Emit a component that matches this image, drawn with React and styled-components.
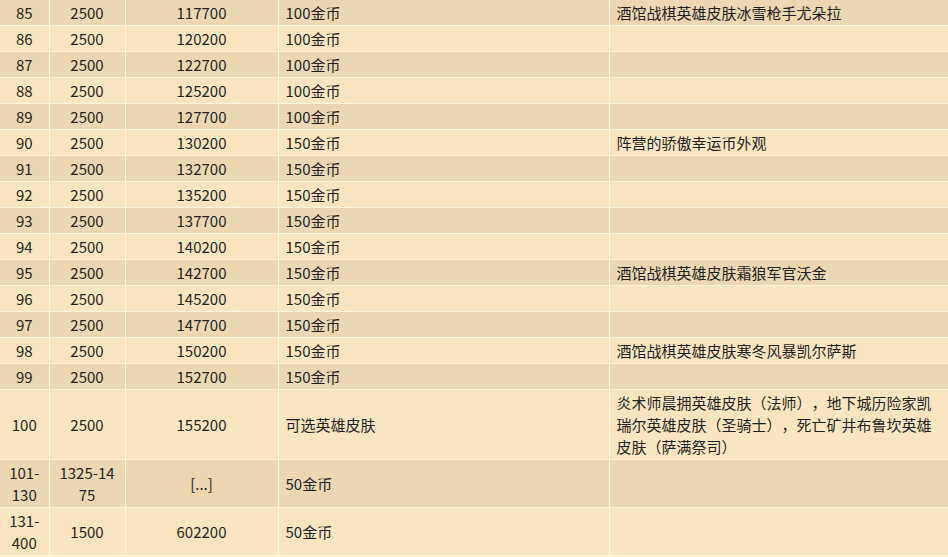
import React from "react";
import styled, { createGlobalStyle } from "styled-components";

const GlobalStyle = createGlobalStyle`
  html, body {
    margin: 0;
    padding: 0;
    background: #f9e7c1;
  }
  body {
    font-family: "Microsoft YaHei", "Noto Sans CJK SC", "Noto Sans", sans-serif;
    color: #1f1f1f;
  }
`;

const Table = styled.table`
  width: 948px;
  border-collapse: collapse;
  table-layout: fixed;
  font-size: 15px;
  line-height: 22px;
  text-spacing-trim: space-all;
`;

const Col = styled.col`
  width: ${({ $w }) => $w}px;
`;

const Row = styled.tr`
  background-color: ${({ $odd }) => ($odd ? "#ebd8b3" : "#f9e6c0")};
`;

const Cell = styled.td`
  padding: 2px 7px 1px;
  border-right: 1px solid #fff4dd;
  border-bottom: 1px solid #fff4dd;
  text-align: ${({ $left }) => ($left ? "left" : "center")};
  vertical-align: middle;
  word-break: break-all;

  &:last-child {
    border-right: none;
  }
`;

const widths = [49, 76, 153, 331, 339];

const rows = [
  ["85", "2500", "117700", "100金币", "酒馆战棋英雄皮肤冰雪枪手尤朵拉"],
  ["86", "2500", "120200", "100金币", ""],
  ["87", "2500", "122700", "100金币", ""],
  ["88", "2500", "125200", "100金币", ""],
  ["89", "2500", "127700", "100金币", ""],
  ["90", "2500", "130200", "150金币", "阵营的骄傲幸运币外观"],
  ["91", "2500", "132700", "150金币", ""],
  ["92", "2500", "135200", "150金币", ""],
  ["93", "2500", "137700", "150金币", ""],
  ["94", "2500", "140200", "150金币", ""],
  ["95", "2500", "142700", "150金币", "酒馆战棋英雄皮肤霜狼军官沃金"],
  ["96", "2500", "145200", "150金币", ""],
  ["97", "2500", "147700", "150金币", ""],
  ["98", "2500", "150200", "150金币", "酒馆战棋英雄皮肤寒冬风暴凯尔萨斯"],
  ["99", "2500", "152700", "150金币", ""],
  [
    "100",
    "2500",
    "155200",
    "可选英雄皮肤",
    "炎术师晨拥英雄皮肤（法师），地下城历险家凯瑞尔英雄皮肤（圣骑士），死亡矿井布鲁坎英雄皮肤（萨满祭司）",
  ],
  ["101-130", "1325-1475", "[...]", "50金币", ""],
  ["131-400", "1500", "602200", "50金币", ""],
];

const App = () => (
  <>
    <GlobalStyle />
    <Table>
      <colgroup>
        {widths.map((w, i) => (
          <Col key={i} $w={w} />
        ))}
      </colgroup>
      <tbody>
        {rows.map((r, i) => (
          <Row key={r[0]} $odd={i % 2 === 0}>
            <Cell>{r[0]}</Cell>
            <Cell>{r[1]}</Cell>
            <Cell>{r[2]}</Cell>
            <Cell $left>{r[3]}</Cell>
            <Cell $left>{r[4]}</Cell>
          </Row>
        ))}
      </tbody>
    </Table>
  </>
);

export default App;
